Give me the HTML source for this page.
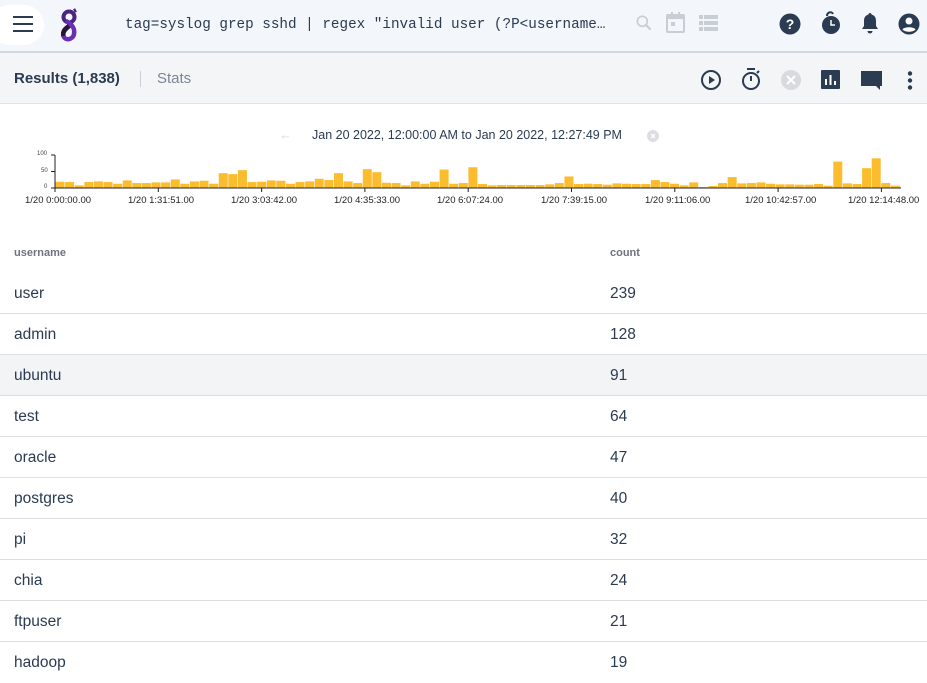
<!DOCTYPE html>
<html><head><meta charset="utf-8"><style>
*{margin:0;padding:0;box-sizing:border-box}
body{width:927px;height:680px;overflow:hidden;background:#fff;font-family:"Liberation Sans",Roboto,sans-serif;color:#2b3b52;position:relative}
.top{position:absolute;left:0;top:0;width:927px;height:53px;background:#f3f6fb;border-bottom:2px solid #d3d8e0}
.menu{position:absolute;left:-10px;top:5px;width:54px;height:40px;background:#fff;border-radius:20px}
.q{position:absolute;left:125px;top:17px;font-family:"Liberation Mono",monospace;font-size:14.3px;color:#2b3b52}
.bar2{position:absolute;left:0;top:53px;width:927px;height:51px;background:#f4f5f7;border-bottom:1px solid #dfe2e6}
.res{position:absolute;left:14px;top:70px;font-size:15px;font-weight:bold}
.sep{position:absolute;left:140px;top:71px;width:1px;height:16px;background:#ccd}
.stats{position:absolute;left:157px;top:70px;font-size:15px;color:#7a8595}
.range{position:absolute;left:312px;top:128px;font-size:12.5px;color:#2b3b52}
.th{position:absolute;top:247px;font-size:11px;font-weight:bold;color:#6d7380}
.row{position:absolute;left:0;width:927px;height:41px;border-bottom:1px solid #dcdee2;font-size:15.5px}
.row span{position:absolute;top:12px}
.ax{position:absolute;top:195px;font-size:9.5px;color:#222}
</style></head><body>
<div class="top">
 <div class="menu"><div style="position:absolute;left:23px;top:11px;width:20px;height:2px;background:#2b3b52;box-shadow:0 7px 0 #2b3b52,0 14px 0 #2b3b52"></div></div>
 <svg style="position:absolute;left:59px;top:7px" width="20" height="36" viewBox="0 0 20 36"><ellipse cx="10" cy="10" rx="5.5" ry="5.5" fill="none" stroke="#4a2480" stroke-width="4"/><path d="M15 4l2-1" stroke="#4a2480" stroke-width="4"/><path d="M7 14 C14 18 16 22 15 27 C14 33 6 34 4.5 29 C3 24 9 20 13 17" fill="none" stroke="#6b2fb3" stroke-width="4.5"/><path d="M4.5 29 C3 24 7 21 10 19" fill="none" stroke="#2a1436" stroke-width="4.5"/></svg>
 <div class="q">tag=syslog grep sshd | regex "invalid user (?P&lt;username…</div>
 <svg style="position:absolute;left:634px;top:13px" width="20" height="20" viewBox="0 0 24 24"><circle cx="10" cy="10" r="6" fill="none" stroke="#c9cdd4" stroke-width="2"/><path d="M14 14l6 6" stroke="#c9cdd4" stroke-width="2.5"/></svg>
 <svg style="position:absolute;left:666px;top:12px" width="20" height="22" viewBox="0 0 20 22"><rect x="1" y="3" width="17" height="17" rx="1" fill="none" stroke="#c9cdd4" stroke-width="2"/><rect x="1" y="3" width="17" height="4" fill="#c9cdd4"/><rect x="5" y="0" width="2" height="4" fill="#c9cdd4"/><rect x="12" y="0" width="2" height="4" fill="#c9cdd4"/><rect x="5" y="10" width="4" height="4" fill="#c9cdd4"/></svg>
 <svg style="position:absolute;left:699px;top:15px" width="19" height="16"><g fill="#c9cdd4"><rect x="0" y="0" width="4" height="4"/><rect x="5" y="0" width="14" height="4"/><rect x="0" y="6" width="4" height="4"/><rect x="5" y="6" width="14" height="4"/><rect x="0" y="12" width="4" height="4"/><rect x="5" y="12" width="14" height="4"/></g></svg>
 <svg style="position:absolute;left:779px;top:13px" width="22" height="22" viewBox="0 0 22 22"><circle cx="11" cy="11" r="10.5" fill="#2b3b52"/><text x="11" y="16" text-anchor="middle" font-size="14" font-weight="bold" fill="#fff" font-family="Liberation Sans">?</text></svg>
 <svg style="position:absolute;left:821px;top:11px" width="20" height="24" viewBox="0 0 20 24"><circle cx="10" cy="14" r="9" fill="#2b3b52"/><path d="M6 5 C6 1 11 0 12 3" fill="none" stroke="#2b3b52" stroke-width="2"/><path d="M10 9v5h4" fill="none" stroke="#fff" stroke-width="1.5"/></svg>
 <svg style="position:absolute;left:861px;top:12px" width="18" height="22" viewBox="0 0 18 22"><path d="M9 1c1 0 1.5.7 1.5 1.5C14 3.5 15 6 15 9v5l2 3H1l2-3V9c0-3 1-5.5 4.5-6.5C7.5 1.7 8 1 9 1z" fill="#2b3b52"/><path d="M6.5 19h5a2.5 2.5 0 0 1-5 0z" fill="#2b3b52"/></svg>
 <svg style="position:absolute;left:898px;top:13px" width="22" height="22" viewBox="0 0 22 22"><circle cx="11" cy="11" r="10.5" fill="#2b3b52"/><circle cx="11" cy="8" r="3.5" fill="#fff"/><path d="M4.5 16.5C6 13.5 16 13.5 17.5 16.5C15 19.5 7 19.5 4.5 16.5z" fill="#fff"/></svg>
</div>
<div class="bar2"></div>
<div class="res">Results (1,838)</div><div class="sep"></div><div class="stats">Stats</div>
<svg style="position:absolute;left:700px;top:69px" width="22" height="22" viewBox="0 0 22 22"><circle cx="11" cy="11" r="9" fill="none" stroke="#2b3b52" stroke-width="2"/><path d="M9 7v8l6-4z" fill="#2b3b52"/></svg>
<svg style="position:absolute;left:740px;top:68px" width="22" height="23" viewBox="0 0 22 23"><rect x="7" y="0" width="8" height="2" fill="#2b3b52"/><circle cx="11" cy="13" r="8" fill="none" stroke="#2b3b52" stroke-width="2"/><path d="M11 13V8" stroke="#2b3b52" stroke-width="2"/><path d="M17 5l2-2" stroke="#2b3b52" stroke-width="2"/></svg>
<svg style="position:absolute;left:780px;top:69px" width="22" height="22" viewBox="0 0 22 22"><circle cx="11" cy="11" r="10" fill="#d8dadd"/><path d="M7 7l8 8M15 7l-8 8" stroke="#fff" stroke-width="2"/></svg>
<svg style="position:absolute;left:821px;top:70px" width="20" height="20"><rect width="19" height="19" rx="1" fill="#2b3b52"/><rect x="4" y="9" width="2" height="6" fill="#fff"/><rect x="8.5" y="5" width="2" height="10" fill="#fff"/><rect x="13" y="11" width="2" height="4" fill="#fff"/></svg>
<svg style="position:absolute;left:861px;top:70px" width="21" height="21" viewBox="0 0 21 21"><path d="M0 1h21v15h-2v4l-4-4H0z" fill="#2b3b52"/></svg>
<svg style="position:absolute;left:907px;top:71px" width="6" height="19"><circle cx="3" cy="2.5" r="2.2" fill="#2b3b52"/><circle cx="3" cy="9.5" r="2.2" fill="#2b3b52"/><circle cx="3" cy="16.5" r="2.2" fill="#2b3b52"/></svg>

<div style="position:absolute;left:279px;top:127px;font-size:13px;color:#d8dbe0">←</div>
<div class="range">Jan 20 2022, 12:00:00 AM to Jan 20 2022, 12:27:49 PM</div>
<svg style="position:absolute;left:647px;top:130px" width="12" height="12"><circle cx="6" cy="6" r="6" fill="#dcdee2"/><path d="M4 4l4 4M8 4l-4 4" stroke="#fff" stroke-width="1.3"/></svg>

<svg id="ch" style="position:absolute;left:0;top:148px" width="927" height="48"></svg>
<div style="position:absolute;left:37px;top:151px;font-size:6px;color:#444">100</div>
<div style="position:absolute;left:41px;top:168px;font-size:6px;color:#444">50</div>
<div style="position:absolute;left:44px;top:184px;font-size:6px;color:#444">0</div>
<div class="ax" style="left:25px">1/20 0:00:00.00</div>
<div class="ax" style="left:128px">1/20 1:31:51.00</div>
<div class="ax" style="left:231px">1/20 3:03:42.00</div>
<div class="ax" style="left:334px">1/20 4:35:33.00</div>
<div class="ax" style="left:437px">1/20 6:07:24.00</div>
<div class="ax" style="left:541px">1/20 7:39:15.00</div>
<div class="ax" style="left:645px">1/20 9:11:06.00</div>
<div class="ax" style="left:745px">1/20 10:42:57.00</div>
<div class="ax" style="left:848px">1/20 12:14:48.00</div>

<div class="th" style="left:14px">username</div>
<div class="th" style="left:610px">count</div>
<div class="row" style="top:273px"><span style="left:14px">user</span><span style="left:610px">239</span></div>
<div class="row" style="top:314px"><span style="left:14px">admin</span><span style="left:610px">128</span></div>
<div class="row" style="top:355px;background:#f3f4f6"><span style="left:14px">ubuntu</span><span style="left:610px">91</span></div>
<div class="row" style="top:396px"><span style="left:14px">test</span><span style="left:610px">64</span></div>
<div class="row" style="top:437px"><span style="left:14px">oracle</span><span style="left:610px">47</span></div>
<div class="row" style="top:478px"><span style="left:14px">postgres</span><span style="left:610px">40</span></div>
<div class="row" style="top:519px"><span style="left:14px">pi</span><span style="left:610px">32</span></div>
<div class="row" style="top:560px"><span style="left:14px">chia</span><span style="left:610px">24</span></div>
<div class="row" style="top:601px"><span style="left:14px">ftpuser</span><span style="left:610px">21</span></div>
<div class="row" style="top:642px;border:none"><span style="left:14px">hadoop</span><span style="left:610px">19</span></div>
<script>
var v=[19,18,8,18,20,18,13,23,15,15,17,17,26,13,20,22,13,45,42,54,18,19,23,22,13,18,20,28,24,45,20,15,57,48,16,15,8,20,13,19,56,13,15,63,
12,8,9,9,9,9,9,11,15,35,12,13,12,10,14,13,12,12,24,18,13,8,17,3,6,15,33,14,15,17,13,11,11,10,10,12,7,80,14,12,60,90,15,7];
var s='<line x1="55" y1="7" x2="55" y2="40" stroke="#222" stroke-width="1"/>';
['7','23.5','40'].forEach(function(y){s+='<line x1="51" y1="'+y+'" x2="55" y2="'+y+'" stroke="#222"/>'});
var w=845/v.length;
for(var i=0;i<v.length;i++){var h=v[i]*0.33;s+='<rect x="'+(55.5+i*w)+'" y="'+(40-h)+'" width="'+(w-0.6)+'" height="'+h+'" fill="#fbbc2e"/>';}
s+='<line x1="55" y1="40" x2="901" y2="40" stroke="#222"/>';
for(var k=0;k<9;k++){var x=55+k*103.3;s+='<line x1="'+x+'" y1="40" x2="'+x+'" y2="44" stroke="#222"/>';}
document.getElementById('ch').innerHTML=s;
</script>
</body></html>
